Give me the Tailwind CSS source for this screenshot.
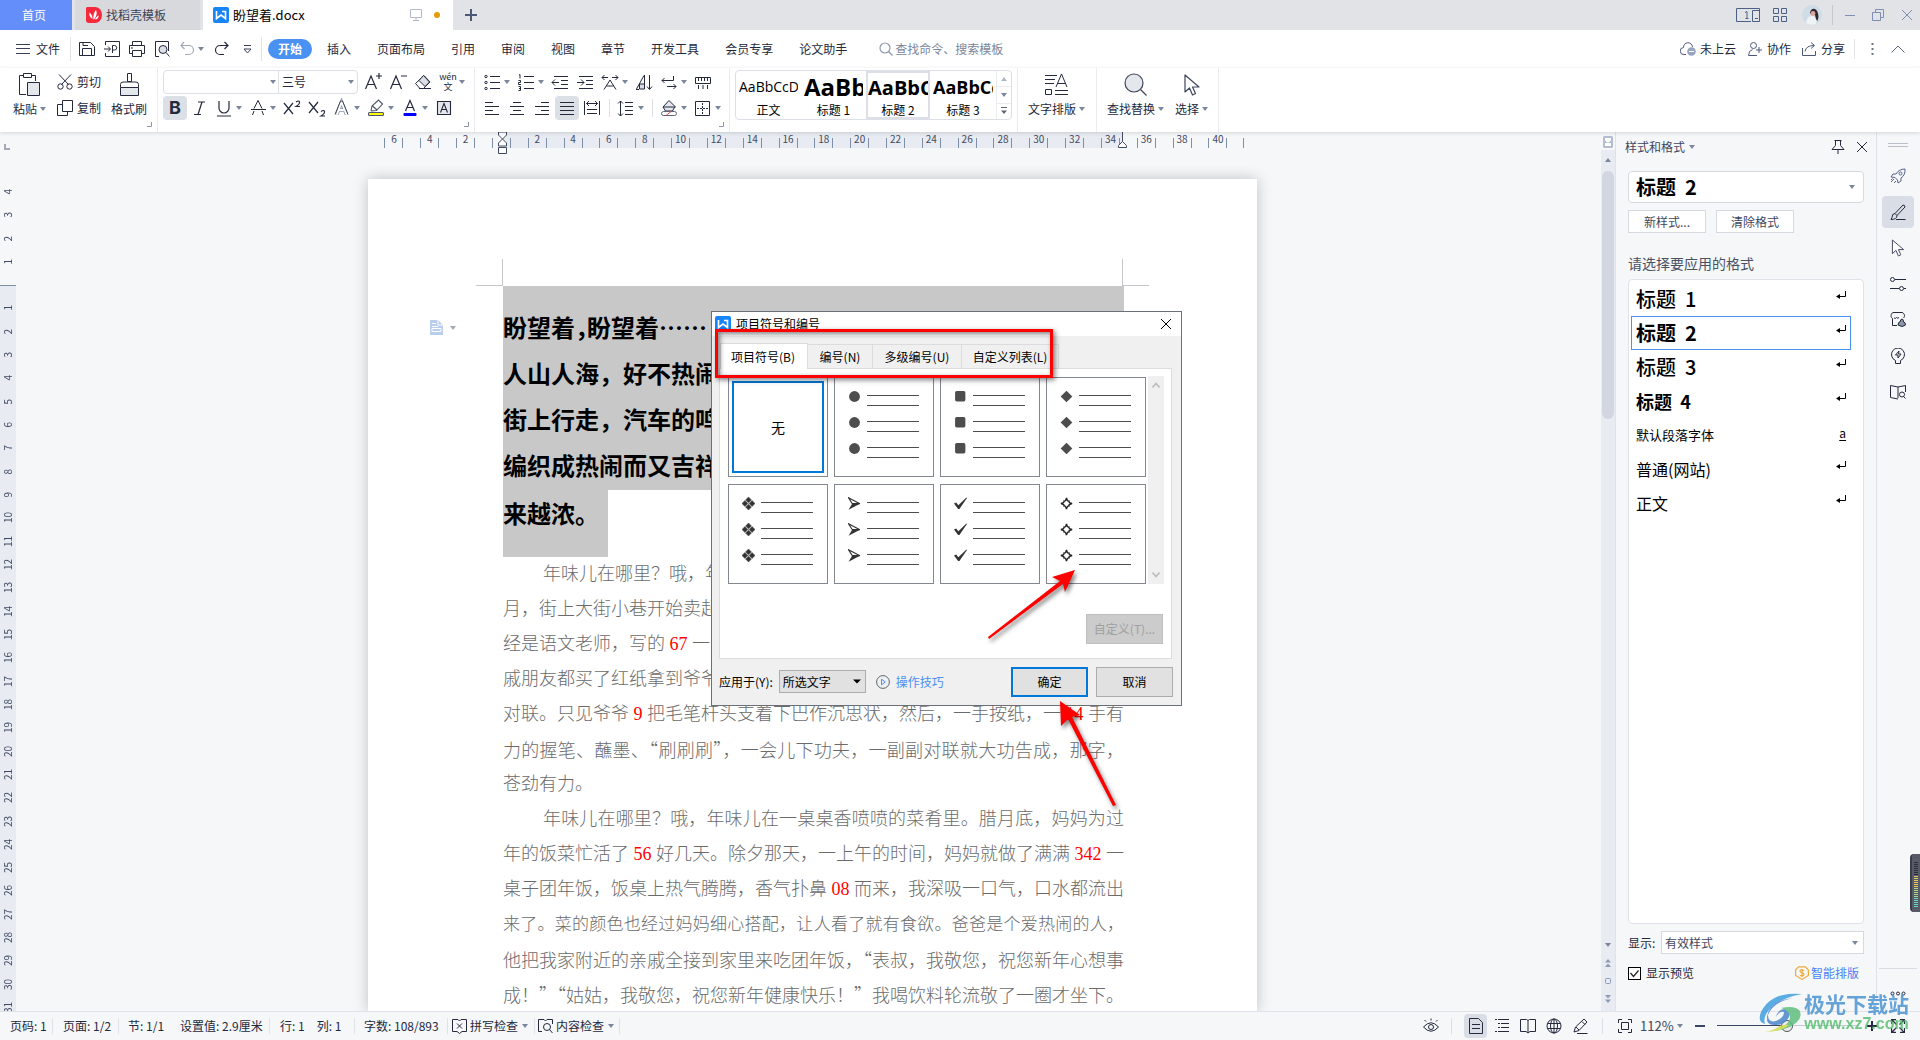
<!DOCTYPE html>
<html lang="zh-CN">
<head>
<meta charset="utf-8">
<title>盼望着.docx</title>
<script src="https://cdn.jsdelivr.net/npm/@tailwindcss/browser@4"></script>
</head>
<body class="h-screen flex flex-col overflow-hidden bg-[#f5f7f9] text-xs text-[#24293d] font-['Noto_Sans_CJK_SC',sans-serif]">

<!-- Shared symbols -->
<svg class="hidden">
  <symbol id="caret" viewBox="0 0 8 8"><path d="M1 2h6L4 6z" fill="#7b869c"/></symbol>
  <symbol id="wps" viewBox="0 0 16 16"><rect width="16" height="16" rx="2" fill="#1784f7"/><path d="M3.500 4v7.500L8 8l4.500 3.500V4.500H9" fill="none" stroke="#fff" stroke-width="1.600"/></symbol>
  <symbol id="cursor" viewBox="0 0 20 24"><path d="M3 2v17l4.500-4 3 7 3-1.500-3-6.500H17z" fill="#fff" stroke="#3f465c" stroke-width="1.200" stroke-linejoin="round"/></symbol>
  <symbol id="ret" viewBox="0 0 10 9"><path d="M9.500 0v5.500H2" fill="none" stroke="#000"/><path d="M0 5.500l4-2.500v5z" fill="#000"/></symbol>
  <symbol id="lines" viewBox="0 0 98 98"><path d="M32 17.500h52M32 27.500h52M32 43.500h52M32 53.500h52M32 69.500h52M32 79.500h52" stroke="#4d4d4d"/></symbol>
  <symbol id="b-dot" viewBox="0 0 12 12"><circle cx="6" cy="6" r="5" fill="#4d4d4d"/></symbol>
  <symbol id="b-sq" viewBox="0 0 12 12"><rect x="1" y="1" width="9.500" height="9.500" rx="1.500" fill="#4d4d4d"/></symbol>
  <symbol id="b-dia" viewBox="0 0 12 12"><path d="M6 .6L11.400 6 6 11.400.6 6z" fill="#4d4d4d"/></symbol>
  <symbol id="b-four" viewBox="0 0 12 12"><path d="M6 0l2.700 2.700L6 5.400 3.300 2.700zM6 6.600l2.700 2.700L6 12 3.300 9.300zM2.700 3.300L5.400 6 2.700 8.700 0 6zM9.300 3.300L12 6 9.300 8.700 6.600 6z" fill="#333" stroke="#4d4d4d" stroke-width=".5"/></symbol>
  <symbol id="b-arr" viewBox="0 0 12 12"><path d="M.5.7l10.500 5.500H4z" fill="#fff" stroke="#333" stroke-width="1.100"/><path d="M.5 11.700L11.500 6H4z" fill="#333"/></symbol>
  <symbol id="b-chk" viewBox="0 0 12 12"><path d="M0 6l2-1 2 2.500L11.500.5 12 1 5 11H3.800z" fill="#333"/></symbol>
  <symbol id="b-star" viewBox="0 0 12 12"><path d="M6 .8Q6.600 4 8.200 3.800 8 5.400 11.200 6 8 6.600 8.200 8.200 6.600 8 6 11.200 5.400 8 3.800 8.200 4 6.600.8 6 4 5.400 3.800 3.800 5.400 4 6 .8z" fill="#fff" stroke="#222" stroke-width="1.300"/></symbol>
</svg>

<!-- Title bar -->
<header class="h-[30px] shrink-0 flex items-center bg-[#e1e3e7]">
  <button class="w-[72px] h-full pr-1 bg-[#648ffb] text-white">首页</button>
  <button class="ml-[3px] w-[125px] h-full bg-[#d8d9dd] flex items-center gap-1 pl-[11px] text-[#3c4358]">
    <svg class="size-4" viewBox="0 0 16 16"><path d="M1 0h8a7 8 0 0 1 0 16H3a3 3 0 0 1-3-3V1z" fill="#f7273c"/><path d="M7.500 13C7 9 7.500 6 10 3c1.500 3 .5 7-2.500 10zM6.500 12C3.500 10 3 8 3.500 5.500 5.500 7 6.500 9 6.500 12zM9 12.500c.8-2 2-3.500 3.800-4C12.500 11 11 12.500 9 12.500z" fill="#fff"/></svg>
    找稻壳模板
  </button>
  <div class="ml-[3px] w-[250px] h-full bg-white flex items-center pl-[10px] pr-[13px] text-black text-[13px]">
    <svg class="size-4 mr-1"><use href="#wps"/></svg>盼望着.docx
    <svg class="ml-auto w-[12px] h-3" viewBox="0 0 12 12" fill="none" stroke="#b3b8cc"><path d="M.5.5h11v8H.5zM6 8.500v3M3 11.500h6"/></svg>
    <span class="ml-3 size-[6px] rounded-full bg-[#e59a06]"></span>
  </div>
  <button class="ml-3" aria-label="新建"><svg class="size-3" viewBox="0 0 12 12"><path d="M6 0v12M0 6h12" stroke="#4c5878" stroke-width="2"/></svg></button>
  <div class="ml-auto flex items-center pr-2">
    <svg class="w-6 h-[14px]" viewBox="0 0 24 14" fill="none" stroke="#4c5f85"><path d="M15 13.500H.5V.5h23v13H16.500v-11h7M19 10.500h3M9 4.500l2-1v7M9.500 10.500h3"/></svg>
    <svg class="ml-[13px] size-[14px]" viewBox="0 0 14 14" fill="none" stroke="#4c5f85"><path d="M.5.5h5v5h-5zM8.500.5h5v5h-5zM.5 8.500h5v5h-5zM8.500 8.500h5v5h-5z"/></svg>
    <svg class="ml-[15px] size-5" viewBox="0 0 20 20"><circle cx="10" cy="10" r="10" fill="#cfdde6"/><path d="M4 18q1-7 6-7t4 8q-6 2-10-1z" fill="#eef3f6"/><path d="M8 8q1-5 5-4 3 1 3.500 8l-1 4q-2-2-2.500-6-1-2-2.500-1l-1 1z" fill="#2f2630"/><circle cx="11" cy="8.500" r="2.400" fill="#d9a798"/></svg>
    <span class="ml-[10px] w-px h-5 bg-[#c6c8ce]"></span>
    <button class="ml-3" aria-label="最小化"><svg class="w-[10px] h-3" viewBox="0 0 10 12"><path d="M0 6.500h10" stroke="#7f8fb3"/></svg></button>
    <button class="ml-[17px]" aria-label="还原"><svg class="size-3" viewBox="0 0 12 12" fill="none" stroke="#7f8fb3"><path d="M.5 3.500h8v8h-8zM3.500 3V.5h8v8H9"/></svg></button>
    <button class="ml-[18px]" aria-label="关闭"><svg class="size-[10px]" viewBox="0 0 10 10"><path d="M0 0l10 10M10 0L0 10" stroke="#7f8fb3"/></svg></button>
  </div>
</header>

<!-- Menu row -->
<nav class="h-[38px] shrink-0 bg-white flex items-center">
  <button class="ml-4 flex items-center gap-[6px]"><svg class="w-[14px] h-[10px]" viewBox="0 0 14 10"><path d="M0 .5h14M0 4.500h14M0 9.500h14" stroke="#3a4056"/></svg>文件</button>
  <span class="ml-[10px] w-px h-6 bg-[#e1e3e7]"></span>
  <div class="ml-2 flex items-center gap-[9px]">
    <svg class="size-4" viewBox="0 0 16 16" fill="none" stroke="#24293d"><path d="M.5 1.500h11l4 4v9H.5zM3.500 14V7.500h9V14M4 1.500v3h5"/></svg>
    <svg class="size-4" viewBox="0 0 16 16" fill="none" stroke="#24293d"><path d="M1.500 4V.5h14v15h-14V12M0 8h6M4 5.500L6.500 8 4 10.500M8.500 12V4.500h2a2 2 0 0 1 0 4.500h-2"/></svg>
    <svg class="size-4" viewBox="0 0 16 16" fill="none" stroke="#24293d"><path d="M3.500 4.500v-4h9v4M3.500 12.500h-3v-8h15v8h-3M3.500 9.500h9v6h-9zM2 7h2"/></svg>
    <svg class="size-4" viewBox="0 0 16 16" fill="none" stroke="#24293d"><path d="M5 15.500H1.500V.5h13V10"/><circle cx="9" cy="8.500" r="4" fill="#dcdfe6"/><path d="M12 11.500l3.500 4"/></svg>
    <svg class="size-4" viewBox="0 0 16 16" fill="none" stroke="#a3a9b8" stroke-width="1.200"><path d="M5 1L2 4.500 5.500 8M2 4.500h8a4.500 4.500 0 0 1 0 9H6"/></svg>
  </div>
  <svg class="ml-[2px] size-2"><use href="#caret"/></svg>
  <svg class="ml-[9px] size-4" viewBox="0 0 16 16" fill="none" stroke="#24293d" stroke-width="1.200"><path d="M10.500 1L14 4.500 10.500 8M14 4.500H6a4.500 4.500 0 0 0 0 9h4"/></svg>
  <svg class="ml-[13px] size-[9px]" viewBox="0 0 9 9"><path d="M1 .5h7" stroke="#3a4056"/><path d="M1 4h7L4.500 8z" fill="#fff" stroke="#3a4056"/></svg>
  <span class="ml-[9px] w-px h-6 bg-[#e1e3e7]"></span>
  <button class="ml-[6px] w-11 h-5 rounded-full bg-[#4991f2] text-white font-bold leading-5">开始</button>
  <div class="ml-[15px] flex gap-[26px]">
    <button>插入</button><button>页面布局</button><button>引用</button><button>审阅</button><button>视图</button><button>章节</button><button>开发工具</button><button>会员专享</button><button>论文助手</button>
  </div>
  <label class="ml-8 flex items-center gap-[2px]">
    <svg class="size-[14px]" viewBox="0 0 14 14" fill="none" stroke="#8f99ad" stroke-width="1.200"><circle cx="6" cy="6" r="5"/><path d="M9.500 9.500l4 4"/></svg>
    <input class="w-[130px] outline-none placeholder:text-[#7b869c]" placeholder="查找命令、搜索模板">
  </label>
  <div class="ml-auto flex items-center pr-[15px]">
    <svg class="w-4 h-[14px]" viewBox="0 0 16 14" fill="none" stroke="#4c5878"><path d="M6 12.500H4a3.500 3.500 0 0 1-.5-7 4.500 4.500 0 0 1 9-.5"/><circle cx="11.500" cy="9.500" r="4.300" fill="#97a3bf" stroke="none"/><path d="M9 9.500h5" stroke="#fff"/></svg>
    <a href="#" class="ml-1">未上云</a>
    <svg class="ml-3 w-[14px] h-[14px]" viewBox="0 0 14 14" fill="none" stroke="#4c5878"><circle cx="5.500" cy="3.500" r="3"/><path d="M5 13.500H.5q0-5 4-6M11 5v6M8 8h6M5 13.500h4"/></svg>
    <a href="#" class="ml-[5px]">协作</a>
    <svg class="ml-[11px] w-[15px] h-[14px]" viewBox="0 0 15 14" fill="none" stroke="#4c5878"><path d="M.5 6v7.500h13V9M3 9.500q1-6 9-6M9 .5l3.500 3L9 6.500"/></svg>
    <a href="#" class="ml-1">分享</a>
    <span class="ml-[9px] w-px h-5 bg-[#e1e3e7]"></span>
    <svg class="ml-4 w-[3px] h-3" viewBox="0 0 3 12" fill="#6d7688"><path d="M.5 0h2v2h-2zM.5 5h2v2h-2zM.5 10h2v2h-2z"/></svg>
    <svg class="ml-[17px] w-[14px] h-2" viewBox="0 0 14 8" fill="none" stroke="#5d6578"><path d="M.5 7.500L7 1l6.500 6.500"/></svg>
  </div>
</nav>

<!-- Ribbon -->
<section class="h-16 shrink-0 bg-white flex relative z-10 shadow-[0_1px_4px_rgba(0,0,0,0.14)]">
  <div class="w-[158px] border-r border-[#ebecef] pl-3 flex relative">
    <button class="w-[36px] flex flex-col items-center pt-[5px]">
      <svg class="w-[22px] h-6" viewBox="0 0 22 24" fill="none" stroke="#24293d"><path d="M7 21.500H.5v-19H4M13 2.500h3.500V8M4.500.5h8v4h-8z"/><path d="M8.500 9.500h12v13h-12z" fill="#e4e7ec"/></svg>
      <span class="flex items-center gap-[2px] mt-[3px] leading-[18px] whitespace-nowrap">粘贴<svg class="size-2"><use href="#caret"/></svg></span>
    </button>
    <div class="ml-[9px] flex flex-col pt-[5px] gap-2">
      <button class="flex items-center gap-1 leading-[18px]"><svg class="size-4" viewBox="0 0 16 16" fill="none" stroke="#24293d"><path d="M2 .5l9.500 10M14 .5L4.500 10.500"/><circle cx="3.500" cy="12.500" r="2.700"/><circle cx="12.500" cy="12.500" r="2.700"/></svg>剪切</button>
      <button class="flex items-center gap-1 leading-[18px]"><svg class="size-4" viewBox="0 0 16 16" fill="none" stroke="#24293d"><path d="M5.500.5h10v11h-10zM5 4.500H.5v11h10V12"/></svg>复制</button>
    </div>
    <button class="ml-[10px] flex flex-col items-center pt-[5px]">
      <svg class="w-[19px] h-6" viewBox="0 0 19 24" fill="none" stroke="#24293d"><path d="M7.500.5h4v8h-4zM.5 14.500v-3q0-2.500 2.500-2.500h13q2.500 0 2.500 2.500v3"/><path d="M.5 14.500h18v8H.5z" fill="#e4e7ec"/></svg>
      <span class="mt-[3px] leading-[18px]">格式刷</span>
    </button>
    <svg class="absolute right-[5px] bottom-[5px] size-[5px]" viewBox="0 0 5 5"><path d="M4.500 0v4.500H0" fill="none" stroke="#8d96a8"/></svg>
  </div>

  <div class="w-[317px] border-r border-[#ebecef] pl-[5px] pt-[2px] relative">
    <div class="flex items-center h-6">
      <div class="flex border border-[#dcdfe5] rounded-sm h-6 w-[195px]">
        <div class="w-[115px] flex items-center justify-end pr-[1px] border-r border-[#dcdfe5]"><svg class="size-2"><use href="#caret"/></svg></div>
        <div class="flex-1 flex items-center justify-between pl-[3px] pr-[2px]">三号<svg class="size-2"><use href="#caret"/></svg></div>
      </div>
      <div class="flex items-center gap-[5px] ml-[5px]">
        <svg class="size-5" viewBox="0 0 20 20" fill="none" stroke="#24293d" stroke-width="1.200"><path d="M2.500 17L8 4l5.500 13M4.500 12.500h7M13 4h6M16 1v6"/></svg>
        <svg class="size-5" viewBox="0 0 20 20" fill="none" stroke="#24293d" stroke-width="1.200"><path d="M2.500 17L8 4l5.500 13M4.500 12.500h7M13 4h6"/></svg>
        <svg class="size-5" viewBox="0 0 20 20" fill="none" stroke="#24293d"><path d="M2.500 11.500l8.500-8 6 6.500-6.500 6.500H7zM6 16.500h12"/><path d="M6 8.500l4.500-5 6 6.500-4.500 4.500z" fill="#dcdfe6"/></svg>
        <button class="w-5 flex flex-col items-center text-[9px] leading-[10px]"><span>wén</span><span>文</span></button>
      </div>
      <svg class="size-2"><use href="#caret"/></svg>
    </div>
    <div class="flex items-center gap-[5px] h-6 mt-[2px]">
      <button class="w-6 h-6 rounded-sm bg-[#dbe0e6] text-lg leading-6 font-bold font-[Inter]">B</button>
      <svg class="w-[17px] h-5" viewBox="0 0 17 20" fill="none" stroke="#24293d" stroke-width="1.200"><path d="M6 4h7M2 16.500h7M10 4L6 16.500"/></svg>
      <span class="flex items-center gap-px"><svg class="size-5" viewBox="0 0 20 20" fill="none" stroke="#24293d" stroke-width="1.200"><path d="M5 3v7a5 5 0 0 0 10 0V3M3 18h14"/></svg><svg class="size-2"><use href="#caret"/></svg></span>
      <span class="flex items-center gap-px"><svg class="size-5" viewBox="0 0 20 20" fill="none" stroke="#24293d"><path d="M6 10.500l4-8 4 8M6 13l-1.500 4M14 13l1.500 4M3 11.500h15"/></svg><svg class="size-2"><use href="#caret"/></svg></span>
      <svg class="size-5" viewBox="0 0 20 20" fill="none" stroke="#24293d" stroke-width="1.200"><path d="M2 5l9 11M11 5L2 16M14 4q3-2 3.500 0T14 8.500h4"/></svg>
      <svg class="size-5" viewBox="0 0 20 20" fill="none" stroke="#24293d" stroke-width="1.200"><path d="M2 4l9 11M11 4L2 15M14 13.500q3-2 3.500 0T14 18h4"/></svg>
      <span class="flex items-center gap-px"><svg class="size-5" viewBox="0 0 20 20" fill="none" stroke="#8d96a8" stroke-width="3.500"><path d="M5 16.500l4.500-12.500 5 12.500M7 12h6"/><path d="M5 16.500l4.500-12.500 5 12.500M7 12h6" stroke="#fff" stroke-width="2"/><path d="M3 16.500L8.500 3h2L16 16.500" stroke="#3f465c" stroke-width="1"/></svg><svg class="size-2"><use href="#caret"/></svg></span>
      <span class="flex items-center gap-px"><svg class="size-5" viewBox="0 0 20 20" fill="none" stroke="#4c5468" stroke-width="1.100"><path d="M5 13l1-5 6.500-6 4 4-6 6.500-5.500.5M6.500 8l4.500 4"/><rect x="2.500" y="14.500" width="15" height="3" rx="1" fill="#ff0"/></svg><svg class="size-2"><use href="#caret"/></svg></span>
      <span class="flex items-center gap-px"><svg class="size-5" viewBox="0 0 20 20" fill="none" stroke="#24293d" stroke-width="1.200"><path d="M5.500 13l4.500-10.500L14.500 13M7 9.500h6"/><rect x="3.500" y="15" width="13" height="3" rx="1" fill="#00f" stroke="none"/></svg><svg class="size-2"><use href="#caret"/></svg></span>
      <svg class="size-5" viewBox="0 0 20 20" fill="none" stroke="#24293d" stroke-width="1.100"><path d="M3.500 3.500h13v13h-13z" fill="#e4e7ec"/><path d="M6.500 14.500l3.500-9 3.500 9M7.500 11.500h5"/></svg>
    </div>
    <svg class="absolute right-[5px] bottom-[5px] size-[5px]" viewBox="0 0 5 5"><path d="M4.500 0v4.500H0" fill="none" stroke="#8d96a8"/></svg>
  </div>

  <div class="w-[255px] border-r border-[#ebecef] pl-[7px] pt-[2px] relative">
    <div class="flex items-center gap-[5px] h-6">
      <span class="flex items-center gap-px"><svg class="size-5" viewBox="0 0 20 20" fill="none" stroke="#24293d"><path d="M8 4.500h10M8 10.500h10M8 16.500h10"/><circle cx="4" cy="4.500" r="1.200"/><circle cx="4" cy="10.500" r="1.200"/><circle cx="4" cy="16.500" r="1.200"/></svg><svg class="size-2"><use href="#caret"/></svg></span>
      <span class="flex items-center gap-px"><svg class="size-5" viewBox="0 0 20 20" fill="none" stroke="#24293d"><path d="M8 4.500h10M8 10.500h10M8 16.500h10M3 3l1-.5V6.500M2.500 8.500h2v2h-2v2h2.500M2.500 14.500h2v4h-2M3 16.500h1.500"/></svg><svg class="size-2"><use href="#caret"/></svg></span>
      <svg class="size-5" viewBox="0 0 20 20" fill="none" stroke="#24293d"><path d="M4 4.500h14M11 8.500h7M11 12.500h7M4 16.500h14M2 10.500h7M5 7.500l-3 3 3 3"/></svg>
      <svg class="size-5" viewBox="0 0 20 20" fill="none" stroke="#24293d"><path d="M4 4.500h14M11 8.500h7M11 12.500h7M4 16.500h14M2 10.500h7M6 7.500l3 3-3 3"/></svg>
      <span class="flex items-center gap-px"><svg class="size-5" viewBox="0 0 20 20" fill="none" stroke="#24293d"><path d="M4 17.500L10 8l6 9.500M6.500 14h7M2 5.500h6M12 5.500h6M4.500 3L2 5.500 4.500 8M15.500 3L18 5.500 15.500 8"/></svg><svg class="size-2"><use href="#caret"/></svg></span>
      <svg class="size-5" viewBox="0 0 20 20" fill="none" stroke="#24293d"><path d="M2.500 17L10 3.500M10.500 3v14h-5v-5h5" fill="#dcdfe6"/><path d="M2 17.500h3M15.500 3v14M13 14.500l2.500 3 2.500-3"/></svg>
      <span class="flex items-center gap-px"><svg class="size-5" viewBox="0 0 20 20" fill="none" stroke="#24293d"><path d="M14.500 4v4.500H3M5.500 6L3 8.500 5.500 11M8 14.500h9M14.500 12l2.500 2.500-2.500 2.500"/></svg><svg class="size-2"><use href="#caret"/></svg></span>
      <svg class="size-5" viewBox="0 0 20 20" fill="none" stroke="#24293d"><path d="M2.500 5.500h15v6h-15zM5.500 6v3M8.500 6v3M11.500 6v3M14.500 6v3M5.500 13v4M10 13v4M14.500 13v4"/></svg>
    </div>
    <div class="flex items-center gap-[5px] h-6 mt-[2px]">
      <svg class="size-5" viewBox="0 0 20 20" stroke="#24293d"><path d="M3 4.500h8M3 8.500h14M3 12.500h8M3 16.500h14"/></svg>
      <svg class="size-5" viewBox="0 0 20 20" stroke="#24293d"><path d="M6 4.500h8M3 8.500h14M6 12.500h8M3 16.500h14"/></svg>
      <svg class="size-5" viewBox="0 0 20 20" stroke="#24293d"><path d="M9 4.500h8M3 8.500h14M9 12.500h8M3 16.500h14"/></svg>
      <svg class="w-6 h-6 -mx-0.5 rounded-sm bg-[#dbe0e6]" viewBox="0 0 24 24" stroke="#24293d"><path d="M5 6.500h14M5 10.500h14M5 14.500h14M5 18.500h14"/></svg>
      <svg class="size-5" viewBox="0 0 20 20" fill="none" stroke="#24293d"><path d="M2.500 3v14M17.500 3v14M4.500 5.500h11M7 3L4.500 5.500 7 8M13 3l2.500 2.500L13 8M5 11.500h10M5 15.500h10"/></svg>
      <span class="w-px h-[18px] bg-[#dcdfe5] ml-[2px] mr-px"></span>
      <span class="flex items-center gap-px"><svg class="size-5" viewBox="0 0 20 20" fill="none" stroke="#24293d"><path d="M9 4.500h8M9 8.500h8M9 12.500h8M9 16.500h8M4.500 3v15M2 5.500L4.500 3 7 5.500M2 15.500L4.500 18 7 15.500"/></svg><svg class="size-2"><use href="#caret"/></svg></span>
      <span class="w-px h-[18px] bg-[#dcdfe5] ml-[2px] mr-px"></span>
      <span class="flex items-center gap-px"><svg class="size-5" viewBox="0 0 20 20" fill="none" stroke="#24293d"><path d="M4 9l6-6.500 6 6L13.500 13h-7zM4 9h12.500" fill="#e4e7ec"/><rect x="2.500" y="13.500" width="15" height="4" rx="2" fill="#fff" stroke="#5d6578"/><path d="M7 17.500l5-4" stroke="#e34b4b"/></svg><svg class="size-2"><use href="#caret"/></svg></span>
      <span class="flex items-center gap-px"><svg class="size-5" viewBox="0 0 20 20" fill="none" stroke="#24293d"><path d="M2.500 3.500h14v14h-14z"/><path d="M9.500 5v11M4 10.500h11" stroke-dasharray="2 1"/></svg><svg class="size-2"><use href="#caret"/></svg></span>
    </div>
    <svg class="absolute right-[5px] bottom-[5px] size-[5px]" viewBox="0 0 5 5"><path d="M4.500 0v4.500H0" fill="none" stroke="#8d96a8"/></svg>
  </div>

  <div class="w-[288px] border-r border-[#ebecef] pl-[5px] pt-[2px]">
    <div class="w-[277px] h-[50px] border border-[#dcdfe5] rounded-sm flex text-center text-black">
      <button class="w-[65px] px-[3px] flex flex-col overflow-hidden"><span class="h-8 w-full leading-8 text-sm overflow-hidden whitespace-nowrap font-['Open_Sans']">AaBbCcD</span><span class="w-full leading-[14px]">正文</span></button>
      <button class="w-[65px] px-[3px] flex flex-col overflow-hidden"><span class="h-8 w-full leading-8 text-left text-2xl font-bold overflow-hidden whitespace-nowrap font-['Open_Sans']">AaBb</span><span class="w-full leading-[14px]">标题 1</span></button>
      <button class="w-[64px] border-2 border-[#dcdfe5] flex flex-col overflow-hidden"><span class="h-[30px] w-full leading-[30px] text-left text-xl font-bold overflow-hidden whitespace-nowrap font-['Open_Sans']">AaBbC</span><span class="w-full leading-[14px]">标题 2</span></button>
      <button class="w-[66px] px-[3px] flex flex-col overflow-hidden"><span class="h-8 w-full leading-8 text-left text-lg font-bold overflow-hidden whitespace-nowrap font-['Open_Sans']">AaBbCc</span><span class="w-full leading-[14px]">标题 3</span></button>
      <div class="flex-1 border-l border-[#ebecef] flex flex-col divide-y divide-[#ebecef]">
        <button class="flex-1 flex items-center justify-center" aria-label="上一行"><svg class="size-2 rotate-180 opacity-60"><use href="#caret"/></svg></button>
        <button class="flex-1 flex items-center justify-center" aria-label="下一行"><svg class="size-2"><use href="#caret"/></svg></button>
        <button class="flex-1 flex items-center justify-center" aria-label="更多"><svg class="size-2" viewBox="0 0 8 8"><path d="M1 .5h6" stroke="#5d6578"/><path d="M1 3.500h6L4 7z" fill="#5d6578"/></svg></button>
      </div>
    </div>
  </div>
  <button class="w-[79px] border-r border-[#ebecef] flex flex-col items-center pt-[5px]">
    <svg class="w-6 h-6" viewBox="0 0 24 24" fill="none" stroke="#24293d"><path d="M0 2.500h12M0 6.500h10M0 10.500h9M11 14l5.500-13L22 14M13 10.500h7M.5 16.500h6v5h-6zM10 17.500h13M10 21.500h13"/></svg>
    <span class="flex items-center gap-[2px] mt-[3px] leading-[18px]">文字排版<svg class="size-2"><use href="#caret"/></svg></span>
  </button>
  <div class="w-[122px] border-r border-[#ebecef] flex pl-[10px] gap-[10px]">
    <button class="flex flex-col items-center pt-[5px]">
      <svg class="w-6 h-6" viewBox="0 0 24 24" fill="none" stroke="#3f465c" stroke-width="1.200"><circle cx="10" cy="10" r="9" fill="#e4e7ec"/><path d="M16.500 16.500l6 6"/></svg>
      <span class="flex items-center gap-[2px] mt-[3px] leading-[18px]">查找替换<svg class="size-2"><use href="#caret"/></svg></span>
    </button>
    <button class="flex flex-col items-center pt-[5px]">
      <svg class="w-5 h-6"><use href="#cursor"/></svg>
      <span class="flex items-center gap-[2px] mt-[3px] leading-[18px]">选择<svg class="size-2"><use href="#caret"/></svg></span>
    </button>
  </div>
</section>

<!-- Work area -->
<main class="flex-1 min-h-0 flex relative">
  <div class="w-4 shrink-0 overflow-hidden relative">
    <svg class="absolute left-1 top-3 size-[6px]" viewBox="0 0 6 6"><path d="M1 0v5h5" fill="none" stroke="#a3a9b8" stroke-width="2"/></svg>
    <div class="absolute inset-x-0 top-[153px] bottom-0 bg-[#e8ebf1] border-t border-[#7f8fa8]"></div>
    <div id="vruler" class="relative mt-12 h-[839px] flex flex-col text-[10px] leading-4 text-[#3f4a63]"></div>
  </div>

  <div class="flex-1 min-w-0 overflow-hidden flex flex-col items-center pl-2">
    <!-- Horizontal ruler -->
    <div class="w-[889px] h-[47px] shrink-0 relative">
      <div class="absolute left-[135px] top-0 w-[620px] h-4 bg-[#e8ebf1]"></div>
      <div class="relative flex pt-[6px] pl-2">
        <div id="hruler" class="w-[860px] flex text-[10px] leading-[10px] text-[#3f4a63]"></div>
        <span class="ml-[7px] w-px h-[10px] bg-[#7f8fa8]"></span>
      </div>
      <svg class="absolute left-[130px] top-0 w-[9px] h-[22px]" viewBox="0 0 9 22" fill="#fff" stroke="#3f4a63"><path d="M.5 0h8v3l-4 4-4-4zM4.500 7l4 4v3h-8v-3zM.5 15.500h8v6h-8z"/></svg>
      <svg class="absolute left-[750px] top-0 w-[9px] h-4" viewBox="0 0 9 16" fill="#fff" stroke="#3f4a63"><path d="M4.500 0v9.500M4.500 9.500l4 4v2h-8v-2z"/></svg>
    </div>
    <!-- Page -->
    <article class="w-[889px] flex-1 bg-white shadow-[0_0_14px_rgba(0,0,0,0.22)]">
      <div class="h-[107px] flex items-end justify-between px-[108px]">
        <span class="w-[27px] h-[27px] border-r border-b border-[#c5c7ca]"></span>
        <span class="w-[27px] h-[27px] border-l border-b border-[#c5c7ca]"></span>
      </div>
      <div class="pl-[135px] pr-[133px] whitespace-nowrap">
        <h2 class="text-2xl leading-[46px] font-bold text-black">
          <span class="block bg-[#c8c8c8] pt-[18px] pb-[2px]">盼望着<span class="[font-feature-settings:'halt']">，</span>盼望着……<br>人山人海，好不热闹<br>街上行走，汽车的鸣<br>编织成热闹而又吉祥</span>
          <span class="block bg-[#c8c8c8] w-[105px] pb-[21px]">来越浓。</span>
        </h2>
        <div class="text-lg leading-[35px] font-light text-[#6b6b6b] font-['Liberation_Serif','Noto_Sans_CJK_SC',serif]">
          <p class="pl-10">年味儿在哪里？哦，年</p>
          <p>月，街上大街小巷开始卖起</p>
          <p>经是语文老师，写的 <span class="text-[#f00]">67</span> 一</p>
          <p>戚朋友都买了红纸拿到爷爷</p>
          <p class="[text-align-last:justify]">对联。只见爷爷 <span class="text-[#f00]">9</span> 把毛笔杆头支着下巴作沉思状，然后，一手按纸，一 <span class="text-[#f00]">14</span> 手有</p>
          <p class="[text-align-last:justify] font-['Noto_Sans_CJK_SC']">力的握笔、蘸墨、“刷刷刷”，一会儿下功夫，一副副对联就大功告成，那字，</p>
          <p>苍劲有力。</p>
          <p class="pl-10 [text-align-last:justify]">年味儿在哪里？哦，年味儿在一桌桌香喷喷的菜肴里。腊月底，妈妈为过</p>
          <p class="[text-align-last:justify]">年的饭菜忙活了 <span class="text-[#f00]">56</span> 好几天。除夕那天，一上午的时间，妈妈就做了满满 <span class="text-[#f00]">342</span> 一</p>
          <p class="[text-align-last:justify]">桌子团年饭，饭桌上热气腾腾，香气扑鼻 <span class="text-[#f00]">08</span> 而来，我深吸一口气，口水都流出</p>
          <p class="[text-align-last:justify] text-[17px]">来了。菜的颜色也经过妈妈细心搭配，让人看了就有食欲。爸爸是个爱热闹的人，</p>
          <p class="[text-align-last:justify] font-['Noto_Sans_CJK_SC']">他把我家附近的亲戚全接到家里来吃团年饭，“表叔，我敬您，祝您新年心想事</p>
          <p class="[text-align-last:justify] font-['Noto_Sans_CJK_SC']">成！”“姑姑，我敬您，祝您新年健康快乐！”我喝饮料轮流敬了一圈才坐下。</p>
        </div>
      </div>
    </article>
  </div>

  <!-- Paragraph options tag in the page margin -->
  <div class="absolute left-[430px] top-[188px] flex items-center gap-[6px]">
    <svg class="w-[13px] h-[15px]" viewBox="0 0 13 15"><path d="M0 0h8l5 5v10H0z" fill="#b9cdec"/><path d="M8 0v5h5M2 3.500h4M2 6.500h6M2 8.500h9v3H2z" fill="none" stroke="#fff"/></svg>
    <svg class="size-2 opacity-70"><use href="#caret"/></svg>
  </div>

  <!-- Vertical scroll bar -->
  <div class="w-[15px] shrink-0 flex flex-col items-center bg-[#e8ebf1] border-r border-[#dfe2e8]">
    <div class="w-full h-[18px] bg-[#f5f7f9] flex items-end justify-center"><svg class="w-[10px] h-3 mb-[2px]" viewBox="0 0 10 12"><rect width="10" height="12" rx="1.500" fill="#b3bdd3"/><path d="M2 2h6v2.500L5 7 2 4.500zM2 7v3h6V7" fill="#fff"/></svg></div>
    <svg class="mt-[6px] size-2 rotate-180"><use href="#caret"/></svg>
    <span class="mt-[7px] w-3 h-[248px] rounded-full bg-[#d2d6e0]"></span>
    <div class="mt-auto flex flex-col items-center gap-[10px] pb-[8px]">
      <svg class="size-2"><use href="#caret"/></svg>
      <svg class="size-2" viewBox="0 0 8 8" fill="#8d9ab5"><path d="M1 3.500h6L4 0zM1 8h6L4 4.500z"/></svg>
      <svg class="size-2" viewBox="0 0 8 8" fill="none" stroke="#8d9ab5"><rect x="1.500" y="1.500" width="5" height="5" rx="1"/></svg>
      <svg class="size-2" viewBox="0 0 8 8" fill="#8d9ab5"><path d="M1 0h6L4 3.500zM1 4.500h6L4 8z"/></svg>
    </div>
  </div>

  <!-- Styles pane -->
  <aside class="w-[261px] shrink-0 border-r border-[#dfe2e8] flex flex-col pl-3 pr-3">
    <div class="h-[30px] flex items-center -ml-[3px] text-[#3f465c]">样式和格式<svg class="ml-[3px] size-2"><use href="#caret"/></svg>
      <svg class="ml-auto w-[14px] h-[14px]" viewBox="0 0 14 14" fill="none" stroke="#24293d"><path d="M3.500.5h7M4.500.5v5l-3.500 4h12l-3.500-4v-5M7 9.500V14"/></svg>
      <button class="ml-3 mr-[-3px]" aria-label="关闭窗格"><svg class="size-[10px]" viewBox="0 0 10 10"><path d="M0 0l10 10M10 0L0 10" stroke="#24293d"/></svg></button>
    </div>
    <div class="mt-[9px] h-8 shrink-0 bg-white border border-[#d6dae0] rounded-sm flex items-center justify-between px-[7px] text-xl font-bold text-black"><span>标题&nbsp; 2</span><svg class="size-2"><use href="#caret"/></svg></div>
    <div class="mt-[7px] flex gap-[10px] text-[#3f465c]">
      <button class="w-[78px] h-[23px] bg-white border border-[#d6dae0]">新样式...</button>
      <button class="w-[78px] h-[23px] bg-white border border-[#d6dae0]">清除格式</button>
    </div>
    <p class="mt-[19px] text-sm leading-[22px] text-[#4a5165]">请选择要应用的格式</p>
    <ul class="mt-[5px] flex-1 min-h-0 bg-white border border-[#dfe2e8] rounded-sm pt-[2px] pl-[2px] pr-3 text-black">
      <li class="h-[34px] flex items-center justify-between px-[5px] text-xl font-medium"><span>标题&nbsp; 1</span><svg class="w-[10px] h-[9px] mb-2"><use href="#ret"/></svg></li>
      <li class="h-[34px] flex items-center justify-between px-1 text-xl font-bold border border-[#4991f2]"><span>标题&nbsp; 2</span><svg class="w-[10px] h-[9px] mb-2"><use href="#ret"/></svg></li>
      <li class="h-[34px] flex items-center justify-between px-[5px] text-xl font-medium"><span>标题&nbsp; 3</span><svg class="w-[10px] h-[9px] mb-2"><use href="#ret"/></svg></li>
      <li class="h-[34px] flex items-center justify-between px-[5px] text-lg font-bold"><span>标题&nbsp; 4</span><svg class="w-[10px] h-[9px] mb-2"><use href="#ret"/></svg></li>
      <li class="h-[34px] flex items-center justify-between px-[5px] text-[13px]"><span>默认段落字体</span><span class="underline underline-offset-2 pb-1 text-xs">a</span></li>
      <li class="h-[34px] flex items-center justify-between px-[5px] text-base"><span>普通(网站)</span><svg class="w-[10px] h-[9px] mb-2"><use href="#ret"/></svg></li>
      <li class="h-[34px] flex items-center justify-between px-[5px] text-base"><span>正文</span><svg class="w-[10px] h-[9px] mb-2"><use href="#ret"/></svg></li>
    </ul>
    <div class="mt-[7px] flex items-center justify-between">
      <label for="show">显示:</label>
      <div class="relative w-[203px]"><select id="show" class="w-full h-[23px] bg-white border border-[#d6dae0] appearance-none pl-[3px] text-[#3f465c]"><option>有效样式</option></select><svg class="absolute right-[5px] top-2 size-2 pointer-events-none"><use href="#caret"/></svg></div>
    </div>
    <div class="mt-[7px] h-6 flex items-center">
      <label class="flex items-center gap-[5px]"><span class="relative size-[13px]"><input type="checkbox" checked class="block size-[13px] appearance-none bg-white border border-black"><svg class="absolute left-0 top-0 size-[13px] pointer-events-none" viewBox="0 0 13 13"><path d="M2.500 6l3 3.500 5-6" fill="none" stroke="#222" stroke-width="1.200"/></svg></span>显示预览</label>
      <a href="#" class="ml-auto mr-[5px] flex items-center gap-[2px] text-[#4a7ff5]"><svg class="size-[14px]" viewBox="0 0 14 14" fill="none" stroke="#efab3c" stroke-width="1.200"><path d="M3.500.8h7L13.400 4v5.500L7 13.400.6 9.500V4z"/><path d="M9 4.500q-4-1.500-4 .8c0 2 4 1 4 3s-3 1.800-4 .8M7 3v8"/></svg>智能排版</a>
    </div>
    <div class="h-[26px] shrink-0"></div>
  </aside>

  <!-- Tool strip -->
  <aside class="w-[43px] shrink-0 flex flex-col items-center pr-[2px] text-[#3a4056]">
    <span class="mt-[11px] w-5 h-1 shrink-0 border-y border-[#b9bfca]"></span>
    <div class="mt-[13px] flex flex-col gap-1">
      <button class="size-8 flex items-center justify-center" aria-label="快捷"><svg class="size-4" viewBox="0 0 16 16" fill="none" stroke="#56628a"><path d="M15 1q-6 0-9 5H3L1 9l4 .5L7.500 12l.5 3 3-2v-3q4.500-3 4-9zM4 11l-3 3M6 13l-2 2M2.500 10.500L1 12"/><circle cx="10.500" cy="5.500" r="1.500"/></svg></button>
      <button class="size-8 flex items-center justify-center rounded-sm bg-[#d9dee6]" aria-label="样式"><svg class="size-4" viewBox="0 0 16 16" fill="none" stroke="#24293d"><path d="M5 9.500l8-8.500q2 0 2 2l-8 8.500M5 9.500q-3 0-3 4l-1 2q6 0 6-4zM6 15.500h9.500"/></svg></button>
      <button class="size-8 flex items-center justify-center" aria-label="选择"><svg class="w-4 h-5"><use href="#cursor"/></svg></button>
      <button class="size-8 flex items-center justify-center" aria-label="属性"><svg class="size-4" viewBox="0 0 16 16" fill="none" stroke="#24293d"><circle cx="2.500" cy="3.500" r="2"/><path d="M5 3.500h11M0 12.500h9M14 12.500h2"/><circle cx="11.500" cy="12.500" r="2"/></svg></button>
      <button class="size-8 flex items-center justify-center" aria-label="稻壳"><svg class="size-4" viewBox="0 0 16 16" fill="none" stroke="#24293d"><path d="M2.500 6.500C.5 5.500.5 1.500 3 .5h9c3 1 3 4 1.500 5.500M2.500 6.500v7H7M4 6q1.500 1 2.500-.5Q8 7 9 5.500"/><path d="M8 13q0-3 2-3 .5-3 2-3t1.500 3q2 0 2 3-3 3-7.500 0z" fill="#8d96a8"/></svg></button>
      <button class="size-8 flex items-center justify-center" aria-label="灵感"><svg class="size-4" viewBox="0 0 16 16" fill="none" stroke="#24293d"><path d="M5.500 12.500a6.500 6.500 0 1 1 5 0v3h-5zM9 3L5.500 7H8v3l3-4H8.500z"/></svg></button>
      <button class="size-8 flex items-center justify-center" aria-label="查阅"><svg class="size-4" viewBox="0 0 16 16" fill="none" stroke="#24293d"><path d="M8 14V3M8 3L.5 1.500v12L8 15M8 3l7.500-1.500V8"/><circle cx="12" cy="10.500" r="2.500"/><path d="M13.500 12.500l2 2"/></svg></button>
    </div>
    <span class="mt-auto mb-[22px] w-[38px] h-px bg-[#d9dce3]"></span>
    <svg class="w-4 h-[5px] mb-[15px]" viewBox="0 0 16 5" fill="none" stroke="#24293d"><circle cx="2.500" cy="2.500" r="1.500"/><circle cx="8" cy="2.500" r="1.500"/><circle cx="13.500" cy="2.500" r="1.500"/></svg>
  </aside>

  <div class="absolute right-0 top-[722px] w-[10px] h-[58px] rounded-l bg-[#575c68] border-l-2 border-[#3a3e48] pl-[2px] pt-2">
    <svg class="w-1 h-[46px]" viewBox="0 0 4 46" stroke-width="4"><path d="M2 0v14" stroke="#2d3038" stroke-dasharray="1 1"/><path d="M2 14v12" stroke="#e8c75c" stroke-dasharray="1 1"/><path d="M2 26v10" stroke="#a9d68a" stroke-dasharray="1 1"/><path d="M2 36v10" stroke="#67d6c0" stroke-dasharray="1 1"/></svg>
  </div>

  <!-- Bullets and numbering dialog -->
  <div role="dialog" aria-label="项目符号和编号" class="absolute left-[711px] top-[179px] w-[471px] h-[395px] bg-[#f0f0f0] border border-[#6b7078] flex flex-col text-black">
    <div class="h-6 bg-white flex items-center pl-[3px] pr-[10px]"><svg class="size-4 mr-[5px]"><use href="#wps"/></svg>项目符号和编号
      <button class="ml-auto" aria-label="关闭对话框"><svg class="size-[10px]" viewBox="0 0 10 10"><path d="M0 0l10 10M10 0L0 10" stroke="#000"/></svg></button>
    </div>
    <div class="mt-[7px] flex pl-2 items-end relative z-10 -mb-px">
      <button class="w-[88px] h-[26px] pr-[2px] bg-white border border-b-0 border-[#dcdcdc]">项目符号(B)</button>
      <button class="w-[65px] h-[25px] border-y border-r border-[#dcdcdc]">编号(N)</button>
      <button class="w-[89px] h-[25px] border-y border-r border-[#dcdcdc]">多级编号(U)</button>
      <button class="w-[97px] h-[25px] border-y border-r border-[#dcdcdc]">自定义列表(L)</button>
    </div>
    <div class="ml-[7px] mr-[9px] h-[291px] bg-white border border-[#dcdcdc] pt-[7px] pl-2">
      <div class="flex gap-[2px]">
        <div id="bullets" class="grid grid-cols-4 gap-[6px] w-[418px] pt-px"></div>
        <div class="w-4 h-[208px] bg-[#f0f0f0] flex flex-col justify-between items-center py-[6px]">
          <svg class="w-2 h-[6px]" viewBox="0 0 8 6"><path d="M.5 5.500L4 1.500l3.500 4" fill="none" stroke="#bcbcbc" stroke-width="1.600"/></svg>
          <svg class="w-2 h-[6px]" viewBox="0 0 8 6"><path d="M.5.5L4 4.500 7.500.5" fill="none" stroke="#bcbcbc" stroke-width="1.600"/></svg>
        </div>
      </div>
      <button disabled class="block ml-auto mr-2 mt-[30px] w-[77px] h-[30px] bg-[#ccc] border border-[#bfbfbf] text-[#a0a0a0]">自定义(T)...</button>
    </div>
    <div class="flex-1 flex items-center pl-[7px] pr-2 pb-px">
      <label for="apply">应用于(Y):</label>
      <div class="relative ml-[6px] w-[87px]"><select id="apply" class="w-full h-[23px] bg-[#e1e1e1] border border-[#adadad] appearance-none pl-[3px]"><option>所选文字</option></select><svg class="absolute right-[5px] top-[9px] w-2 h-[5px] pointer-events-none" viewBox="0 0 8 5"><path d="M0 .5h8L4 4.500z"/></svg></div>
      <svg class="ml-[10px] size-[14px]" viewBox="0 0 14 14" fill="none"><circle cx="7" cy="7" r="6.400" stroke="#5b6470"/><path d="M5.500 4.200v5.600L9.300 7z" stroke="#4991f2"/></svg>
      <a href="#" class="ml-[6px] text-[#4991f2]">操作技巧</a>
      <button class="ml-auto w-[77px] h-[30px] bg-[#e1e1e1] border-2 border-[#0078d7]">确定</button>
      <button class="ml-2 w-[77px] h-[30px] bg-[#e1e1e1] border border-[#adadad]">取消</button>
    </div>
  </div>

  <!-- Annotations -->
  <div class="absolute z-20 left-[715px] top-[197px] w-[338px] h-[49px] border-3 border-[#f00] shadow-[2px_2px_5px_rgba(0,0,0,0.5),inset_2px_2px_5px_rgba(0,0,0,0.5)] pointer-events-none"></div>
  <svg class="absolute z-20 left-[980px] top-[430px] w-[150px] h-[260px] drop-shadow-[2px_3px_2px_rgba(0,0,0,0.5)] pointer-events-none" viewBox="0 0 150 260" fill="#f00">
    <path d="M95 8L72 15l8 4L8 75l1 2 74-55 2 8z"/>
    <path d="M80 139l1 25 7-7 45 87 3-1-44-88 8-2z"/>
  </svg>
</main>

<!-- Status bar -->
<footer class="h-[29px] shrink-0 border-t border-[#dfe2e8] flex items-center pb-px">
  <span class="w-[53px] h-4 leading-4 pl-[10px] border-r border-[#e1e3e7]">页码: 1</span>
  <span class="w-[66px] h-4 leading-4 pl-[10px] border-r border-[#e1e3e7]">页面: 1/2</span>
  <span class="w-[151px] h-4 leading-4 pl-[9px] border-r border-[#e1e3e7] flex gap-4"><span>节: 1/1</span><span>设置值: 2.9厘米</span></span>
  <span class="w-[85px] h-4 leading-4 pl-[10px] border-r border-[#e1e3e7] flex gap-3"><span>行: 1</span><span>列: 1</span></span>
  <span class="w-[93px] h-4 leading-4 pl-[9px] border-r border-[#e1e3e7]">字数: 108/893</span>
  <button class="w-[87px] h-4 pl-[4px] border-r border-[#e1e3e7] flex items-center gap-[3px]"><svg class="w-[15px] h-4" viewBox="0 0 15 16" fill="none" stroke="#24293d"><path d="M6 1.500H.5v12H5l2.500 2 2.500-2h4.500v-12H9L7.500 3zM5 5.500l5 5M10 5.500l-5 5"/></svg>拼写检查<svg class="size-2"><use href="#caret"/></svg></button>
  <button class="w-[85px] h-4 pl-[3px] border-r border-[#e1e3e7] flex items-center gap-[3px]"><svg class="w-[15px] h-4" viewBox="0 0 15 16" fill="none" stroke="#24293d"><path d="M4 13.500H.5v-12H6L7.500 3 9 1.500h5.500V6"/><circle cx="9" cy="9" r="3.500"/><path d="M11.500 11.500l3 3.500"/></svg>内容检查<svg class="size-2"><use href="#caret"/></svg></button>
  <div class="ml-auto flex items-center">
    <svg class="size-4" viewBox="0 0 16 16" fill="none" stroke="#24293d"><path d="M.5 9q7.500-8.500 15 0-7.500 8.500-15 0zM3 3.500L1.500 2M8 2.500V.5M13 3.500L14.500 2"/><circle cx="8" cy="9" r="2.500"/></svg>
    <span class="ml-3 w-px h-4 bg-[#dcdfe5]"></span>
    <button class="ml-3 w-[23px] h-6 rounded-sm bg-[#d9dee6] flex items-center justify-center" aria-label="页面视图"><svg class="w-[14px] h-4" viewBox="0 0 14 16" fill="none" stroke="#24293d"><path d="M.5.5h9l4 4v11H.5zM3 6.500h8M3 10.500h8"/></svg></button>
    <svg class="ml-2 w-[14px] h-4" viewBox="0 0 14 16" stroke="#24293d"><path d="M0 1.500h2M3 1.500h11M3 5.500h2M6 5.500h8M3 9.500h2M6 9.500h8M0 13.500h2M3 13.500h11"/></svg>
    <svg class="ml-[11px] size-4" viewBox="0 0 16 16" fill="none" stroke="#24293d"><path d="M8 2.500L6.500 1.500h-6v12H6l2 1.500 2-1.500h5.500v-12h-6L8 2.500V15"/></svg>
    <svg class="ml-[10px] size-4" viewBox="0 0 16 16" fill="none" stroke="#24293d"><circle cx="8" cy="8" r="7"/><ellipse cx="8" cy="8" rx="3.500" ry="7"/><path d="M1.500 5.500h13M1.500 10.500h13M8 1v14"/></svg>
    <svg class="ml-[10px] size-4" viewBox="0 0 16 16" fill="none" stroke="#24293d"><path d="M2 14l1.500-5L12 1l3 3-8 8.500-5 1.500zM5 15.500h10.500M4 9l3 3M10 3.500l3 3"/></svg>
    <span class="ml-[14px] w-px h-4 bg-[#dcdfe5]"></span>
    <svg class="ml-[15px] size-[14px]" viewBox="0 0 14 14" fill="none" stroke="#24293d"><path d="M.5 4V.5H4M10 .5h3.500V4M13.500 10v3.500H10M4 13.500H.5V10M3.500 3.500h7v7h-7z"/></svg>
    <span class="ml-2 w-[34px] text-[13px] text-[#3f465c]">112%</span>
    <svg class="ml-[2px] size-2"><use href="#caret"/></svg>
    <span class="ml-[11px] w-[10px] h-[2px] bg-[#3a4763]"></span>
    <div class="ml-3 w-[142px] flex items-center"><span class="w-[64px] h-px bg-[#3a4763]"></span><span class="size-3 rounded-full border border-[#555] bg-[#f0eeec]"></span><span class="flex-1 h-px bg-[#c6cad4]"></span></div>
    <svg class="ml-2 size-[10px]" viewBox="0 0 10 10"><path d="M5 0v10M0 5h10" stroke="#24293d" stroke-width="2"/></svg>
    <svg class="ml-[14px] mr-[15px] size-[14px]" viewBox="0 0 14 14" fill="none" stroke="#24293d" stroke-width="1.300"><path d="M.5 5V.5H5M.5.500l5 5M9 .5h4.500V5M13.500.500l-5 5M13.500 9v4.500H9M13.500 13.500l-5-5M5 13.500H.5V9M.5 13.500l5-5"/></svg>
  </div>
</footer>

<!-- Site watermark -->
<div class="fixed right-[11px] bottom-[6px] z-30 flex items-center gap-[1px] pointer-events-none opacity-85">
  <svg class="w-[44px] h-[40px]" viewBox="0 0 44 40"><path d="M43 1Q12-2 2 19q-4 10 4 12Q3 22 15 12 26 4 43 1z" fill="#3f9fe0"/><path d="M34 5Q14 9 9 22q0 8 8 6 8-3 8-9-5-1-8 5 2-8 9-8 7 1 4 8-4 8-13 8-10 1-9-8Q10 8 34 5z" fill="#4b86cc"/><path d="M22 15q14-3 19 3 3 8-8 15-8 4-18 5 12-5 15-10 4-9-8-13z" fill="#5fbf7d"/><path d="M5 39q10-1 15-6 7-2 10-1-8 7-25 7z" fill="#d3dc4c"/></svg>
  <div class="flex flex-col items-center whitespace-nowrap">
    <span class="text-[21px] leading-[22px] font-bold text-[#4c93d3]">极光下载站</span>
    <span class="text-base leading-5 font-bold text-[#5cbf73] font-['Liberation_Sans']">www.xz7.com</span>
  </div>
</div>

<script>
  // Ruler scales: one cell per two units across, one per unit down
  const h = document.getElementById('hruler');
  for (let n = -6; n <= 40; n += 2) {
    h.insertAdjacentHTML('beforeend', `<div class="flex-1 flex justify-center"><span class="w-[19px] h-[10px] border-x border-[#7f8fa8] flex justify-center"><span class="-mt-1">${n ? Math.abs(n) : ''}</span></span></div>`);
  }
  const v = document.getElementById('vruler');
  for (let n = -4; n <= 31; n++) {
    v.insertAdjacentHTML('beforeend', `<div class="flex-1 flex items-center justify-center"><span class="[writing-mode:vertical-rl] rotate-180">${n ? Math.abs(n) : ''}</span></div>`);
  }
  // Bullet presets
  const g = document.getElementById('bullets');
  for (const id of ['', 'b-dot', 'b-sq', 'b-dia', 'b-four', 'b-arr', 'b-chk', 'b-star']) {
    g.insertAdjacentHTML('beforeend', id
      ? `<button class="h-[100px] border border-[#828790] bg-white"><svg class="w-full h-[98px]" viewBox="0 0 98 98"><use href="#lines"/>${[12, 38, 64].map(y => `<use href="#${id}" x="13" y="${y}" width="13" height="13"/>`).join('')}</svg></button>`
      : `<button class="h-[100px] border border-[#828790] bg-white p-[3px]"><span class="flex h-[92px] items-center justify-center border-2 border-[#0078d7] text-sm">无</span></button>`);
  }
</script>
</body>
</html>
